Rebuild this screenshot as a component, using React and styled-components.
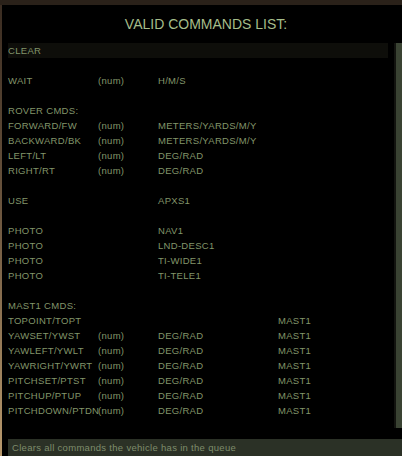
import React from "react";
import styled, { createGlobalStyle } from "styled-components";

const GlobalStyle = createGlobalStyle`
    html, body {
        margin: 0;
        padding: 0;
        background: #000;
    }
    body {
        font-family: "Liberation Sans", Arial, sans-serif;
    }
`;

const Frame = styled.div`
    width: 402px;
    height: 456px;
    display: flex;
    flex-direction: column;
    background: #000;
    overflow: hidden;
`;

const TopBand = styled.div`
    height: 5px;
    flex: none;
    background: #2a2119;
`;

const Body = styled.div`
    flex: 1;
    display: flex;
    min-height: 0;
`;

const SideEdge = styled.div`
    width: 2px;
    flex: none;
    background: linear-gradient(to bottom, #3a2c21 0%, #6b553e 45%, #b8996d 100%);
`;

const Panel = styled.div`
    flex: 1;
    display: flex;
    flex-direction: column;
    background: #000;
    min-width: 0;
`;

const Title = styled.h1`
    margin: 0;
    height: 38px;
    display: flex;
    align-items: center;
    justify-content: center;
    padding-left: 8px;
    font-size: 14px;
    font-weight: normal;
    letter-spacing: 0;
    color: #a5bd8a;
`;

const ListArea = styled.div`
    flex: 1;
    display: flex;
    min-height: 0;
`;

const List = styled.div`
    flex: 1;
    padding-left: 6px;
    padding-right: 6px;
`;

const Row = styled.div`
    display: grid;
    grid-template-columns: 90px 60px 120px 1fr;
    height: 15px;
    line-height: 15px;
    font-size: 9.5px;
    letter-spacing: 0.3px;
    color: #82956a;
    background: ${(p) => (p.$selected ? "#0e0e0a" : "transparent")};
    white-space: nowrap;
`;

const Cell = styled.span`
    overflow: visible;
`;

const Scroll = styled.div`
    width: 8px;
    flex: none;
    display: flex;
    padding-bottom: 11px;
    background: #000;
`;

const ScrollGap = styled.div`
    width: 2px;
    background: #12130f;
`;

const Thumb = styled.div`
    flex: 1;
    background: #3a4333;
`;

const StatusBar = styled.div`
    height: 17px;
    margin-left: 6px;
    flex: none;
    display: flex;
    align-items: center;
    padding-left: 4px;
    background: #2b3126;
    color: #7e8d6c;
    font-size: 9.5px;
    letter-spacing: 0.3px;
`;

const rows = [
    { cells: ["CLEAR"], selected: true },
    { cells: [] },
    { cells: ["WAIT", "(num)", "H/M/S"] },
    { cells: [] },
    { cells: ["ROVER CMDS:"] },
    { cells: ["FORWARD/FW", "(num)", "METERS/YARDS/M/Y"] },
    { cells: ["BACKWARD/BK", "(num)", "METERS/YARDS/M/Y"] },
    { cells: ["LEFT/LT", "(num)", "DEG/RAD"] },
    { cells: ["RIGHT/RT", "(num)", "DEG/RAD"] },
    { cells: [] },
    { cells: ["USE", "", "APXS1"] },
    { cells: [] },
    { cells: ["PHOTO", "", "NAV1"] },
    { cells: ["PHOTO", "", "LND-DESC1"] },
    { cells: ["PHOTO", "", "TI-WIDE1"] },
    { cells: ["PHOTO", "", "TI-TELE1"] },
    { cells: [] },
    { cells: ["MAST1 CMDS:"] },
    { cells: ["TOPOINT/TOPT", "", "", "MAST1"] },
    { cells: ["YAWSET/YWST", "(num)", "DEG/RAD", "MAST1"] },
    { cells: ["YAWLEFT/YWLT", "(num)", "DEG/RAD", "MAST1"] },
    { cells: ["YAWRIGHT/YWRT", "(num)", "DEG/RAD", "MAST1"] },
    { cells: ["PITCHSET/PTST", "(num)", "DEG/RAD", "MAST1"] },
    { cells: ["PITCHUP/PTUP", "(num)", "DEG/RAD", "MAST1"] },
    { cells: ["PITCHDOWN/PTDN", "(num)", "DEG/RAD", "MAST1"] },
];

const App = () => {
    return (
        <>
            <GlobalStyle />
            <Frame>
                <TopBand />
                <Body>
                    <SideEdge />
                    <Panel>
                        <Title>VALID COMMANDS LIST:</Title>
                        <ListArea>
                            <List>
                                {rows.map((row, i) => (
                                    <Row key={i} $selected={row.selected}>
                                        {row.cells.map((c, j) => (
                                            <Cell key={j}>{c}</Cell>
                                        ))}
                                    </Row>
                                ))}
                            </List>
                            <Scroll>
                                <ScrollGap />
                                <Thumb />
                            </Scroll>
                        </ListArea>
                        <StatusBar>Clears all commands the vehicle has in the queue</StatusBar>
                    </Panel>
                </Body>
            </Frame>
        </>
    );
};

export default App;
